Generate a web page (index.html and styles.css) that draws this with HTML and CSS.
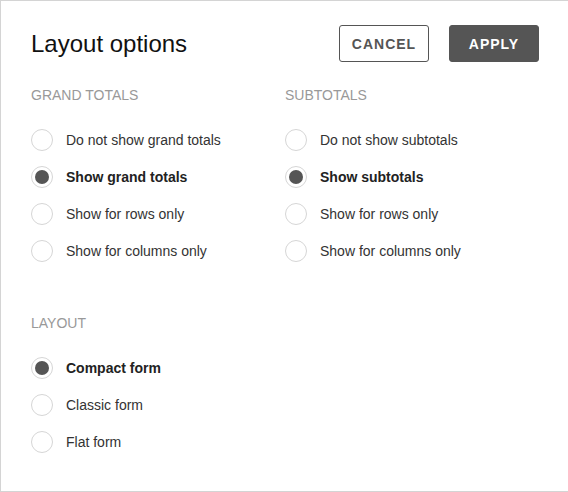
FILE: index.html
```html
<!DOCTYPE html>
<html>
<head>
<meta charset="utf-8">
<link rel="stylesheet" href="styles.css">
</head>
<body>
<div class="dialog">
  <div class="header">
    <h1 class="title">Layout options</h1>
    <div class="actions">
      <button class="btn btn-outline">CANCEL</button>
      <button class="btn btn-solid">APPLY</button>
    </div>
  </div>
  <div class="columns">
    <div class="group">
      <div class="group-title">GRAND TOTALS</div>
      <div class="options">
        <div class="option"><span class="radio"></span><span class="label">Do not show grand totals</span></div>
        <div class="option checked"><span class="radio"></span><span class="label">Show grand totals</span></div>
        <div class="option"><span class="radio"></span><span class="label">Show for rows only</span></div>
        <div class="option"><span class="radio"></span><span class="label">Show for columns only</span></div>
      </div>
    </div>
    <div class="group">
      <div class="group-title">SUBTOTALS</div>
      <div class="options">
        <div class="option"><span class="radio"></span><span class="label">Do not show subtotals</span></div>
        <div class="option checked"><span class="radio"></span><span class="label">Show subtotals</span></div>
        <div class="option"><span class="radio"></span><span class="label">Show for rows only</span></div>
        <div class="option"><span class="radio"></span><span class="label">Show for columns only</span></div>
      </div>
    </div>
  </div>
  <div class="group layout-group">
    <div class="group-title">LAYOUT</div>
    <div class="options">
      <div class="option checked"><span class="radio"></span><span class="label">Compact form</span></div>
      <div class="option"><span class="radio"></span><span class="label">Classic form</span></div>
      <div class="option"><span class="radio"></span><span class="label">Flat form</span></div>
    </div>
  </div>
</div>
</body>
</html>
```
FILE: styles.css
```css
html, body {
  margin: 0;
  padding: 0;
  overflow: hidden;
  background: #fff;
}
body {
  font-family: "Liberation Sans", Arial, sans-serif;
  color: #333;
}
.dialog {
  box-sizing: border-box;
  width: 570px;
  height: 492px;
  border: 1px solid #d4d4d4;
  padding: 24px 30px 0 30px;
}
.header {
  display: flex;
  align-items: center;
  justify-content: space-between;
  height: 37px;
}
.title {
  margin: 0;
  font-size: 24px;
  font-weight: normal;
  color: #111;
  line-height: 28px;
}
.actions {
  display: flex;
  gap: 20px;
}
.btn {
  box-sizing: border-box;
  width: 90px;
  height: 37px;
  border-radius: 3px;
  font-family: "Liberation Sans", Arial, sans-serif;
  font-size: 14px;
  font-weight: bold;
  letter-spacing: 1px;
  padding: 0;
  cursor: pointer;
}
.btn-outline {
  background: #fff;
  border: 1px solid #555;
  color: #555;
}
.btn-solid {
  background: #555;
  border: 1px solid #555;
  color: #fff;
}
.columns {
  display: grid;
  grid-template-columns: 1fr 1fr;
  margin-top: 25px;
}
.group-title {
  font-size: 14px;
  line-height: 16px;
  color: #999;
}
.options {
  display: flex;
  flex-direction: column;
  gap: 15px;
  margin-top: 26px;
}
.option {
  display: flex;
  align-items: center;
  height: 22px;
  gap: 13px;
}
.radio {
  box-sizing: border-box;
  width: 22px;
  height: 22px;
  border: 1px solid #d6d6d6;
  border-radius: 50%;
  display: flex;
  align-items: center;
  justify-content: center;
  flex: none;
}
.option.checked .radio::after {
  content: "";
  width: 14px;
  height: 14px;
  border-radius: 50%;
  background: #555;
}
.label {
  font-size: 14px;
  color: #333;
}
.option.checked .label {
  font-weight: bold;
  color: #222;
}
.layout-group {
  margin-top: 53px;
}
```
